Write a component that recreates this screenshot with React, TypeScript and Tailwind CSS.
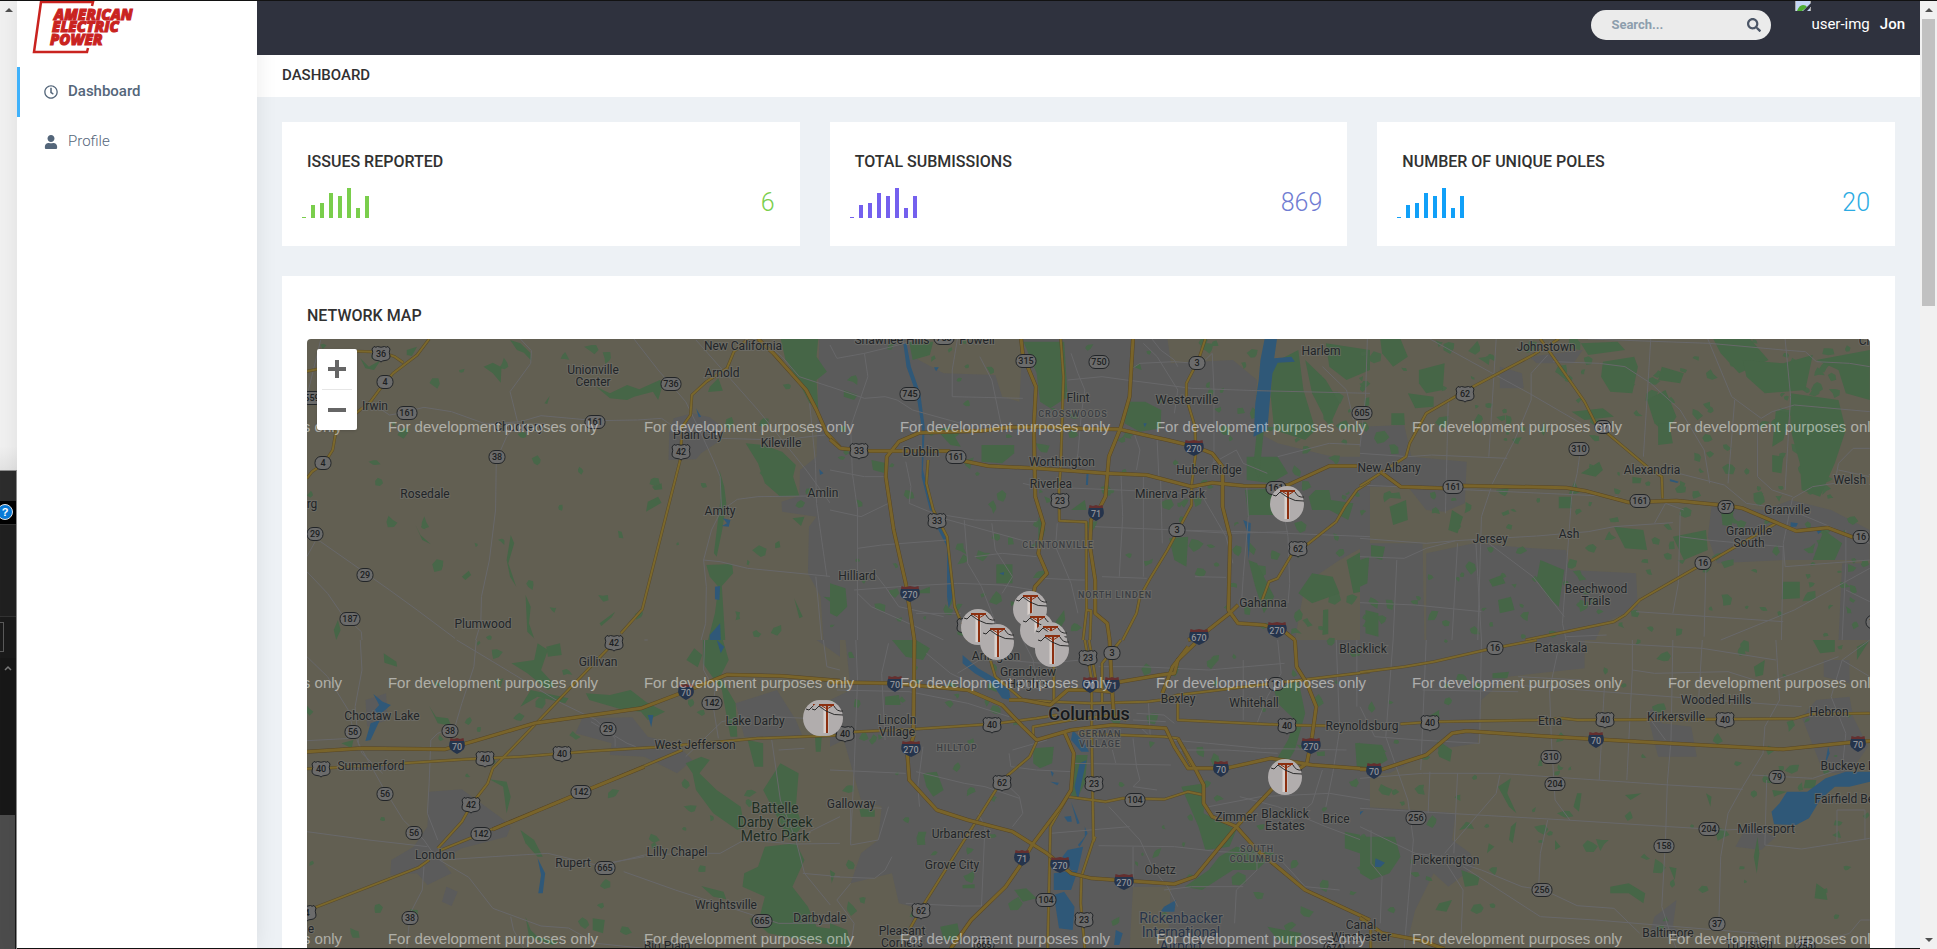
import React from "react";
import { FaUser, FaSearch, FaRegClock } from "react-icons/fa";

type Sheet = {
  x: number;
  y: number;
  kx: number;
  urban: string[];
  green: string[];
  water: string[];
  minor: string[];
  highway: string[];
  freeway: string[];
  scatter: number[][];
  labels: [string, number, number, string?][];
  shields: [string, string, number, number][];
};

/* Each sheet keeps its own survey units: kx units per pixel across, 3 per pixel down. */
const sheets: Sheet[] = [
  {
    x: 300,
    y: 330,
    kx: 2.904,
    urban: [
      "1085,265 1140,250 1190,262 1225,290 1215,335 1165,370 1150,388 1070,390 1072,310",
      "1508,27 1568,27 1568,930 1520,930 1512,800 1475,730 1478,590 1500,560 1400,545 1398,515 1450,498 1452,420 1500,380",
    ],
    green: [
      "1294,340 1345,345 1400,365 1440,405 1432,440 1450,497 1395,500 1350,460 1330,400",
      "1396,27 1505,27 1500,80 1530,125 1500,150 1505,235 1480,220 1440,140 1410,90",
      "533,110 560,98 585,112 583,158 560,130",
      "610,30 640,40 670,70 672,92 650,68 630,60",
      "175,85 200,110 235,90 215,120 190,115",
      "310,60 340,50 325,78 310,75",
      "860,170 900,190 950,165 985,178 1045,150 1055,160 1040,210 1025,185 970,200 950,210 900,205",
      "1190,170 1215,145 1228,182 1185,186",
      "1218,420 1232,470 1238,520 1226,600 1210,680 1202,670 1215,560 1222,500",
      "1180,705 1255,702 1258,730 1225,768 1235,930 1185,930 1205,850 1215,770 1190,740",
      "335,585 350,615 380,643 355,630",
      "612,615 622,640 605,700 628,770 610,740 600,690",
      "655,795 670,830 665,880 680,925 660,905",
      "470,740 490,722 497,735 480,750",
      "1022,470 1050,460 1052,478 1030,480",
      "1010,515 1040,500 1050,518 1005,545",
      "1430,565 1465,560 1455,588",
      "1380,640 1392,632 1395,652 1380,655",
      "870,880 915,845 905,862 875,888",
      "1435,805 1460,860 1450,865",
      "98,900 110,870 118,900 105,930",
      "710,220 725,198 718,222",
      "1520,800 1568,805 1568,830 1540,815",
    ],
    water: [
      "1205,770 1220,768 1218,810 1205,808",
      "1190,915 1220,880 1222,930 1190,930",
      "1228,565 1250,570 1245,590 1225,588 1240,580",
      "1508,418 1520,430 1510,435",
      "1150,235 1165,260 1158,262",
    ],
    minor: [
      "640,27 672,62 670,100 610,185 633,280 600,320 570,390 568,540 550,690 527,800 525,880 510,930",
      "20,200 60,30",
      "290,250 360,232 440,245 540,282 640,275 700,257 860,272 980,270 1050,265 1085,290",
      "970,27 1040,120 1120,215 1160,300 1200,390 1220,440 1224,540 1195,600 1172,690 1180,770 1178,880 1165,930",
      "1172,690 1220,695 1300,715 1568,742",
      "1226,540 1270,508 1330,500 1480,498",
      "20,620 60,635 150,700 260,780 340,840 450,925",
      "20,680 44,635",
      "20,725 80,790 120,850 178,905 180,930",
      "1340,30 1400,80 1450,140 1568,180",
      "1150,30 1330,240 1470,420 1568,560",
      "1480,220 1497,400 1500,520 1530,740",
      "1220,325 1400,330 1478,320 1568,310",
      "1498,740 1515,930",
      "220,228 260,255 290,250",
    ],
    highway: [
      "375,27 340,75 270,130 230,180 205,215 180,235 105,300 95,360 70,400 35,425 20,445",
      "165,64 235,66 275,80 300,98",
      "20,124 50,118",
      "1300,27 1260,65 1240,115 1180,155 1138,195 1134,255 1110,290 1104,390 994,838 932,910",
    ],
    freeway: ["1330,27 1375,70 1470,180 1500,240 1530,310 1568,352"],
    scatter: [[20, 30, 1480, 900, 45]],
    labels: [
      ["New California", 1286, 48],
      ["Arnold", 1226, 130],
      ["Unionville|Center", 850, 139],
      ["Irwin", 217, 228],
      ["Chuckery", 636, 292],
      ["Plain City", 1156, 316],
      ["Kileville", 1396, 340],
      ["Amlin", 1520, 490],
      ["Rosedale", 362, 493],
      ["Amity", 1221, 544],
      ["Plumwood", 530, 882],
      ["rg", 36, 522],
    ],
    shields: [
      ["u", "36", 234, 72],
      ["s", "4", 248, 156],
      ["s", "559", 34, 204],
      ["s", "161", 312, 249],
      ["s", "161", 858, 275],
      ["s", "736", 1078, 161],
      ["s", "38", 573, 381],
      ["u", "42", 1105, 366],
      ["s", "4", 68, 399],
      ["s", "29", 43, 612],
      ["s", "29", 190, 735],
      ["s", "187", 144, 866],
    ],
  },
  {
    x: 300,
    y: 640,
    kx: 2.904,
    urban: [
      "375,455 470,448 500,470 580,530 612,560 600,590 470,625 410,660 440,700 370,735 340,700 262,705 265,660 330,620 370,560",
      "425,740 458,755 440,798 412,785",
      "820,235 965,232 1010,290 1090,310 1140,360 1095,400 1000,350 900,345 905,310 800,280",
      "1265,190 1385,150 1440,240 1460,290 1290,290",
      "190,180 250,160 255,240 195,260",
      "130,385 290,370 250,392",
      "1500,0 1568,0 1568,50",
    ],
    green: [
      "1170,0 1228,0 1245,60 1220,110 1265,190 1270,290 1250,290 1225,150 1190,100 1170,70",
      "1122,60 1145,25 1168,45 1155,82",
      "830,160 900,165 960,150 1010,190 1060,215 1010,240 990,215 940,210 840,180",
      "614,70 680,60 690,10 720,30 700,90 740,135 720,150 660,100",
      "1120,370 1165,350 1190,360 1160,400 1210,450 1280,500 1290,560 1270,570 1200,520 1150,450 1140,400",
      "1300,300 1345,310 1345,380 1320,380",
      "1345,450 1395,370 1448,400 1440,500 1460,560 1420,600 1380,520",
      "1350,620 1440,610 1465,660 1430,740 1475,800 1500,860 1568,870 1568,920 1360,880 1330,850 1350,770 1285,740 1290,700 1330,680",
      "1165,738 1230,755 1238,778 1200,770",
      "375,198 395,230 430,235 440,258 400,250",
      "550,418 600,425 612,470 600,520 590,440",
      "640,570 680,600 705,650 690,650 655,610",
      "850,835 885,840 880,880 850,870",
      "243,40 280,65 282,80 245,68",
      "715,20 755,10 760,45 720,50",
      "120,310 155,300 150,325",
      "655,830 670,870 690,890 750,905 735,915 665,890",
      "640,200 670,150 780,175 770,190 690,170",
      "1495,280 1515,290 1512,335 1498,335",
    ],
    water: [
      "213,162 240,185 264,195 230,225 215,212 230,195",
      "232,240 205,300 190,303 205,250",
      "690,655 712,700 705,760 692,760 700,705",
      "1010,225 1026,225 1020,262",
      "1210,0 1232,20 1222,40",
    ],
    minor: [
      "512,0 505,80 470,190 450,260 400,280 380,300 375,430 370,520 400,600",
      "455,0 560,65 680,140 760,190 860,240 915,295 915,320",
      "175,0 180,90 160,200 170,310 240,440 300,540 360,600 400,660",
      "20,50 80,110 140,210 155,270 180,340 240,400",
      "20,575 200,600 370,620",
      "410,660 560,650 720,640 860,675 1000,650",
      "405,660 490,712 560,805 700,858 780,864 860,910 1000,925",
      "940,695 1090,750 1240,800 1390,850 1568,850",
      "910,668 1000,645 1150,640 1220,640 1290,600 1440,612 1568,610",
      "360,680 355,750 320,820 310,925",
      "612,830 620,870 650,925",
      "1175,0 1172,90 1205,150 1200,200 1215,295",
      "1370,300 1395,480 1440,600 1465,700 1540,795",
      "20,302 150,295",
      "1370,230 1470,235",
      "1390,330 1465,325",
      "1470,580 1568,530",
      "1520,0 1530,80 1568,90",
      "1000,0 1010,0",
      "845,245 950,310 975,320",
      "1120,350 1225,245 1290,230",
      "1460,700 1568,710",
    ],
    highway: [
      "900,20 560,385 545,430 500,490 470,545 400,625",
      "20,386 70,385 300,370 480,358 640,350 850,333 1030,322 1220,305 1330,295 1568,286",
      "30,808 345,682 375,660",
      "405,632 500,592 800,465 1110,330",
    ],
    freeway: [
      "20,335 180,325 420,328 500,305 680,250 990,205 1130,150 1240,104 1400,108 1568,122",
      "560,568 820,456 1000,380",
    ],
    scatter: [[20, 0, 1400, 900, 40]],
    labels: [
      ["Gillivan", 866, 67],
      ["Choctaw Lake", 237, 229],
      ["Summerford", 206, 379],
      ["London", 391, 646],
      ["Lake Darby", 1320, 244],
      ["West Jefferson", 1148, 316],
      ["Battelle|Darby Creek|Metro Park", 1379, 547, "park"],
      ["Lilly Chapel", 1096, 637],
      ["Rupert", 794, 670],
      ["Wrightsville", 1238, 796],
      ["Darbydale", 1510, 834],
      ["Big Plain", 1065, 917],
      ["e", 31, 868],
    ],
    shields: [
      ["u", "42", 912, 8],
      ["i", "70", 1122, 155],
      ["s", "142", 1197, 189],
      ["s", "29", 894, 267],
      ["s", "56", 155, 276],
      ["s", "38", 437, 272],
      ["i", "70", 455, 319],
      ["u", "40", 536, 356],
      ["u", "40", 760, 341],
      ["u", "40", 60, 386],
      ["s", "56", 247, 462],
      ["s", "142", 817, 456],
      ["u", "42", 498, 494],
      ["s", "56", 331, 579],
      ["s", "142", 527, 582],
      ["s", "665", 887, 684],
      ["s", "38", 320, 834],
      ["u", "4", 20, 818],
      ["s", "665", 1343, 843],
    ],
  },
  {
    x: 830,
    y: 330,
    kx: 2.904,
    urban: [
      "0,27 225,27 240,80 330,130 480,135 500,200 550,215 560,27 980,27 990,100 1170,90 1240,150 1230,300 1300,340 1460,380 1568,380 1568,640 1480,690 1380,760 1350,930 0,930",
    ],
    green: [
      "562,35 680,35 690,200 640,235 610,215 600,130",
      "868,215 915,215 962,240 960,295 900,305 855,280",
      "1285,100 1360,60 1375,180 1410,300 1380,330 1290,300 1280,200",
      "1205,480 1300,475 1305,555 1215,555 1210,520",
      "1390,500 1410,480 1450,480 1455,510 1520,520 1505,570 1450,540 1400,540",
      "440,345 535,345 535,370 500,400 440,395",
      "483,703 530,703 530,760 483,760",
      "985,625 1040,620 1035,710 1000,690",
      "1440,40 1568,60 1568,120 1500,150 1450,110",
      "1380,90 1440,150 1480,220 1450,290 1400,190",
      "1210,380 1300,380 1330,430 1280,460 1210,450",
      "230,35 300,35 290,75 240,90",
      "310,300 345,290 380,350 350,345",
      "120,390 165,400 160,430 125,420",
      "0,760 45,775 50,830 20,860 0,850",
      "1215,690 1240,700 1290,800 1260,850 1235,770",
      "1360,790 1400,730 1460,740 1480,790 1400,820",
      "1500,690 1568,650 1568,780 1520,790",
      "1432,840 1447,838 1447,912 1430,915",
      "605,560 625,600 600,680 605,620",
      "655,875 680,840 683,870 665,900",
      "700,540 740,510 745,540",
      "1240,300 1260,300 1245,450 1230,400",
      "40,180 80,195 70,210 40,200",
      "880,110 900,100 905,120",
      "240,790 290,770 290,790",
    ],
    water: [
      "1262,27 1298,27 1290,85 1340,80 1350,95 1300,98 1285,130 1280,180 1270,300 1230,320 1235,220 1245,150 1250,90",
      "213,40 222,40 235,110 262,190 275,290 270,420 285,480 300,545 290,540 266,440 268,300 250,190 222,110",
      "303,545 320,590 345,640 355,800 345,835 340,800 340,650 310,590",
      "302,112 316,112 308,124",
      "745,430 751,430 749,465 743,465",
      "910,280 920,280 914,292",
      "492,730 506,726 504,736",
      "1200,570 1222,580 1216,690 1210,600",
    ],
    minor: [
      "0,45 20,85 100,70 180,50 260,27",
      "0,170 100,205 160,200 195,210 240,240 380,280",
      "100,70 110,140 60,290 65,430 80,540 80,930",
      "370,27 355,120 355,200 560,205",
      "435,80 470,150 500,300",
      "690,150 790,140 860,150 900,155",
      "700,70 720,130 740,180 730,250 720,370 710,420",
      "870,120 900,100 1000,95 1060,100",
      "910,40 950,80 1010,180 1000,250",
      "935,27 960,60 1000,90 1010,110",
      "1080,100 1110,70 1115,180 1115,400",
      "1050,175 1240,182 1568,190",
      "900,155 1050,175",
      "0,420 100,440 160,440",
      "220,395 235,470 230,520 300,550 420,570 600,575",
      "310,560 590,640",
      "80,655 150,645 340,630",
      "0,540 90,560 170,520",
      "70,780 200,770 370,760 500,765 590,780",
      "560,460 600,470 840,480 1040,490",
      "845,430 850,560 840,740",
      "910,440 910,740",
      "960,445 965,640",
      "770,590 1000,600 1200,605 1568,620",
      "660,580 655,650 700,760 720,850",
      "790,740 920,745",
      "1000,600 1160,610 1330,605",
      "620,745 720,750 740,750",
      "1065,470 1150,620 1170,700",
      "1060,740 1150,742",
      "1320,560 1330,620 1335,760 1330,820",
      "1210,470 1215,560 1200,740 1195,820",
      "420,680 500,670 600,680",
      "390,570 400,700 440,770 470,850 500,930",
      "470,580 480,660 530,740 500,790",
      "130,730 160,770 200,830 330,860",
      "250,850 380,850",
      "80,790 120,830 250,890 330,930",
      "1300,380 1450,340 1568,345",
      "1110,400 1180,360 1200,400 1270,430",
      "1430,110 1500,180 1520,270",
      "880,300 900,360 890,420",
      "950,330 955,440",
    ],
    highway: [
      "670,27 678,140 670,410 665,480 666,572 744,576 745,840 735,930",
      "745,840 758,842 755,930",
      "1090,27 1070,90 1035,160 1035,205 1060,290 1062,370 1050,465 1050,525 980,660 930,745 900,800 890,850 850,930",
      "285,390 280,460 300,540 340,620 355,760 362,830 390,900 400,930",
      "1568,455 1530,480 1495,530 1470,575 1390,640 1340,675 1300,745 1275,755 1255,810",
    ],
    freeway: [
      "0,328 30,355 110,363 345,363 375,390 460,408 600,415 800,430 920,435 1050,470 1110,458 1200,467 1290,468 1330,465 1450,408 1530,408",
      "245,930 220,760 185,600 162,440 165,380 200,335 260,308 440,302 520,292 620,290 740,296 840,298 980,330 1060,350 1110,370 1140,410 1140,530 1162,620 1157,840 1185,880 1260,885 1320,905 1350,930",
      "880,27 870,200 845,290 810,380 800,500 785,530 758,570 755,650 770,750 770,850 805,880 812,930",
      "555,27 560,75 598,170 592,290 596,500 620,580 605,670 630,730 595,770 590,800",
      "1185,825 1160,850 1080,915 1040,930",
    ],
    scatter: [
      [0, 30, 540, 880, 45],
      [600, 30, 600, 880, 50],
      [1200, 30, 368, 880, 60],
    ],
    labels: [
      ["Shawnee Hills", 180, 31],
      ["Powell", 428, 31],
      ["Harlem", 1426, 64],
      ["Flint", 721, 205],
      ["Westerville", 1036, 208, "town"],
      ["CROSSWOODS", 706, 252, "area"],
      ["Dublin", 265, 364, "town"],
      ["Worthington", 674, 397],
      ["Huber Ridge", 1101, 421],
      ["Riverlea", 642, 463],
      ["Minerva Park", 986, 493],
      ["CLINTONVILLE", 662, 645, "area"],
      ["Hilliard", 77, 739],
      ["NORTH LINDEN", 827, 795, "area"],
      ["Gahanna", 1258, 820],
    ],
    shields: [
      ["s", "750", 331, 25],
      ["s", "315", 570, 93],
      ["s", "750", 782, 96],
      ["s", "3", 1066, 99],
      ["s", "745", 231, 192],
      ["s", "605", 1545, 249],
      ["u", "33", 85, 363],
      ["s", "161", 367, 381],
      ["i", "270", 1056, 355],
      ["s", "161", 1296, 474],
      ["u", "23", 667, 513],
      ["i", "71", 773, 550],
      ["u", "33", 310, 572],
      ["s", "3", 1008, 600],
      ["u", "62", 1359, 656],
      ["i", "270", 231, 791],
      ["i", "270", 1297, 901],
      ["i", "670", 1071, 921],
      ["u", "33", 394, 888],
    ],
  },
  {
    x: 830,
    y: 640,
    kx: 2.904,
    urban: [
      "45,0 1568,0 1568,927 980,927 990,740 880,740 870,927 230,927 240,800 200,790 180,700 60,730 90,640 140,600 150,500 90,480 40,300 0,320 0,180 60,150",
    ],
    green: [
      "590,325 650,320 645,370 610,385 590,370",
      "715,345 748,345 740,430 720,470 700,470",
      "1090,430 1085,520 1180,570 1160,620 1090,630 1070,560 1020,440",
      "1130,650 1180,620 1290,640 1240,690 1170,690 1080,750 1030,740 1100,690",
      "1495,575 1568,590 1568,650 1495,625",
      "1525,310 1568,305 1568,385 1530,385",
      "1290,150 1360,120 1380,220 1350,330 1310,400 1330,300 1350,240 1300,190",
      "270,400 310,395 330,450 300,470 280,440",
      "180,0 250,0 290,25 270,60 220,50",
      "85,505 130,510 130,530 90,530",
      "160,170 200,165 205,195 160,195",
      "320,860 370,850 380,900 330,900",
      "535,750 570,745 600,775 560,785",
      "1270,860 1370,880 1350,920 1300,900",
      "0,690 15,700 5,730",
      "385,735 420,733 420,745 385,745",
      "1290,370 1330,300 1350,320 1320,380",
      "0,850 50,870 60,920 0,920",
    ],
    water: [
      "385,45 430,85 480,115 520,150 525,180 500,175 470,130 420,100 385,70",
      "705,270 740,310 752,335 730,335 700,300",
      "725,370 745,360 730,430 720,480 710,440",
      "690,630 735,620 720,690 700,690 675,650",
      "650,700 720,690 700,750 650,750",
      "650,765 680,755 710,800 705,870 665,865",
      "970,800 1005,780 1000,815 960,815",
      "640,390 650,400 645,410",
      "640,425 665,428 660,436",
      "680,530 700,528 702,545 690,545",
      "700,485 725,550 718,552",
      "740,560 748,580 725,620 720,615 740,590",
      "830,870 850,880 840,915 825,915",
    ],
    minor: [
      "75,0 80,120 70,390 60,600",
      "0,390 220,400",
      "250,395 390,430 450,440 550,475",
      "270,320 255,440 260,500",
      "520,340 525,380 600,390 700,395",
      "530,330 630,300",
      "710,370 990,375",
      "820,330 830,370",
      "880,295 890,380",
      "810,500 900,600 940,690 980,740 1010,800",
      "780,617 1000,620 1130,635 1240,640",
      "990,300 1100,310 1250,325 1500,330",
      "890,380 900,420 880,440 950,450",
      "890,220 970,225 1000,250",
      "880,240 975,245",
      "925,190 930,290 900,260",
      "220,790 380,798 440,798 450,560 430,520",
      "170,500 140,600 60,615 60,500 0,480",
      "150,505 90,500",
      "530,560 560,520 550,470 500,420",
      "1190,470 1300,500 1440,560 1568,610",
      "1100,500 1250,470 1450,460 1568,480",
      "1430,390 1400,490 1320,560",
      "1470,0 1480,270 1460,400 1440,500",
      "1530,0 1530,200",
      "0,710 130,715 160,690 180,650",
      "60,730 20,780 70,850 60,920",
      "780,80 900,80 1100,90 1320,70",
      "1200,60 1200,240",
      "1010,330 1150,330 1300,340",
      "1300,0 1310,100 1270,170 1240,250",
      "170,10 150,100 160,300",
      "280,40 350,100 430,140",
      "370,100 450,50",
      "20,150 230,155 400,190 520,230",
      "500,60 620,70 730,60",
      "560,0 590,60 600,140",
      "1240,620 1240,690 1180,750 1175,850",
      "1480,750 1380,740 1300,650",
      "640,580 870,560",
      "880,620 880,740",
      "970,750 1050,740 1200,740",
    ],
    highway: [
      "740,0 760,120 760,290 765,600 730,710 728,790 740,927",
      "752,0 772,120",
      "845,0 790,70 790,190",
      "460,40 480,110 560,180 650,185 760,190 920,185 960,180 1010,165 1290,130 1568,95",
      "650,75 650,185",
      "45,277 250,267 470,252 600,235 660,225",
      "590,290 590,260 700,240 820,225 860,240",
      "720,280 970,290 1010,295 1050,380",
      "1010,180 1010,240 1320,255 1440,257",
      "600,305 580,350 500,420 265,805 230,870",
      "690,470 800,485 850,475 970,478 1040,455 1085,465",
      "690,470 640,560 632,927",
      "1570,870 1570,927",
      "770,590 765,605",
    ],
    freeway: [
      "245,0 242,290 225,345 230,420 310,510 400,540 530,575 630,640 700,700 760,715 1000,732 1060,710 1180,560 1290,440 1385,370 1400,290 1412,200 1385,130 1355,80 1350,0",
      "0,127 180,130 400,150 500,195 560,260 600,300 700,270 820,255 975,265 1000,320 1040,385 1150,385 1280,355 1400,375 1568,388",
      "812,0 818,130 960,105 1000,100 1010,60 1060,10",
      "818,130 825,240",
      "680,275 708,340 700,450 670,500 590,610 550,680 510,740 410,840 350,927",
      "1010,295 1060,385 1085,435 1085,490 1110,530 1180,560 1240,630 1380,750 1568,840",
      "520,180 560,180 640,195 690,150 760,150 815,155",
      "1040,20 995,80 965,160",
    ],
    scatter: [
      [0, 0, 560, 900, 35],
      [800, 0, 768, 900, 45],
    ],
    labels: [
      ["Arlington", 482, 48],
      ["Grandview|Heights", 575, 115],
      ["Blacklick", 1547, 27],
      ["Columbus", 752, 219, "city"],
      ["Bexley", 1011, 178],
      ["Whitehall", 1232, 190],
      ["Lincoln|Village", 195, 259],
      ["HILLTOP", 370, 324, "area"],
      ["GERMAN|VILLAGE", 783, 297, "area"],
      ["Reynoldsburg", 1545, 259],
      ["Galloway", 60, 493],
      ["Urbancrest", 381, 583],
      ["Zimmer", 1178, 532],
      ["Blacklick|Estates", 1320, 541],
      ["Brice", 1470, 538],
      ["SOUTH|COLUMBUS", 1241, 643, "area"],
      ["Grove City", 355, 676],
      ["Obetz", 957, 691],
      ["Rickenbacker|International|Airport", 1018, 877, "airport"],
      ["Pleasant|Corners", 210, 892],
      ["Canal|Winchester", 1542, 874],
    ],
    shields: [
      ["u", "23", 750, 54],
      ["s", "3", 820, 39],
      ["i", "70", 188, 133],
      ["i", "70", 755, 136],
      ["i", "71", 818, 136],
      ["s", "16", 1296, 132],
      ["u", "40", 43, 282],
      ["u", "40", 471, 254],
      ["u", "40", 1326, 257],
      ["i", "270", 234, 326],
      ["i", "270", 1396, 319],
      ["i", "70", 1136, 388],
      ["u", "62", 500, 429],
      ["u", "23", 766, 431],
      ["s", "104", 887, 480],
      ["i", "71", 558, 654],
      ["i", "270", 668, 676],
      ["i", "270", 854, 725],
      ["s", "104", 628, 780],
      ["u", "62", 264, 812],
      ["u", "23", 737, 839],
      ["s", "665", 448, 916],
      ["s", "674", 1465, 925],
    ],
  },
  {
    x: 1360,
    y: 330,
    kx: 2.717,
    urban: [
      "0,290 120,285 140,380 290,395 285,520 230,545 180,540 130,470 0,470",
      "0,640 170,640 175,930 0,930",
      "180,670 310,640 470,655 560,660 570,720 750,730 755,830 660,880 640,930 180,930",
      "460,80 605,60 580,100 480,100",
      "380,110 440,130 445,175 380,175",
      "955,530 1100,540 1170,510 1280,540 1385,600 1385,690 1150,690 970,700 945,620",
      "1310,700 1386,700 1386,930 1300,930",
    ],
    green: [
      "55,27 110,27 130,80 90,110 60,70",
      "160,120 230,100 225,180 180,190 160,160",
      "130,190 200,200 200,230 150,235",
      "85,250 120,250 122,285 85,285",
      "660,95 745,80 755,110 740,190 680,185 655,140",
      "600,40 700,35 720,60 620,75",
      "820,110 880,130 870,160 810,150",
      "780,210 830,180 860,260 830,310 800,280",
      "960,27 1060,27 1110,90 1030,130 980,70",
      "1040,90 1150,100 1230,75 1210,180 1100,190 1050,140",
      "1240,90 1385,60 1385,210 1320,190 1300,120",
      "1170,190 1300,210 1320,300 1290,400 1250,500 1200,480 1195,400 1170,300",
      "1130,240 1170,250 1150,330 1120,350",
      "1120,375 1150,380 1145,430 1120,425",
      "540,500 575,500 575,535 540,535",
      "600,430 650,395 660,420 640,440",
      "575,245 660,235 690,260 610,270",
      "80,530 125,510 130,570 90,585",
      "30,645 68,650 60,690 30,680",
      "0,690 25,680 20,760 0,770",
      "490,690 555,720 540,830 510,800 480,750",
      "350,750 385,735 395,760 360,770",
      "375,810 410,800 420,840 380,850",
      "690,590 770,600 780,660 720,655",
      "850,620 940,600 945,660 880,690",
      "1150,755 1195,755 1195,805 1145,808",
      "1260,600 1310,640 1290,690 1230,690",
      "980,530 1015,540 1010,590 985,585",
      "250,540 280,560 265,610 240,600",
      "740,440 765,445 762,460 740,460",
      "15,840 50,850 50,920 15,910",
      "810,280 840,280 850,340 810,345",
    ],
    water: [
      "842,447 866,455 862,459 842,454",
      "1170,577 1190,580 1185,590 1170,590",
      "1240,600 1255,602 1245,612",
    ],
    minor: [
      "20,27 15,200 0,350",
      "190,27 360,130 460,190 600,280",
      "370,27 350,380",
      "510,75 465,130 465,210 420,330 360,460 330,560 320,930",
      "0,370 130,380 195,375 400,385",
      "240,205 232,550",
      "525,95 650,100 720,110 790,160 870,240 935,360 950,460",
      "620,27 950,40 1150,60 1210,65 1240,95 1330,100 1385,110",
      "790,27 770,380",
      "945,27 1010,200 1090,265 1120,245 1180,225 1385,245",
      "1155,27 1170,200 1155,480",
      "1018,210 1000,460",
      "1080,270 1080,440 1120,480 1175,500",
      "600,350 590,430 575,500 550,880 560,930",
      "0,465 700,500",
      "865,430 990,465 1050,520 1170,540 1385,640",
      "0,625 180,640 260,632 480,618 620,605 690,590 850,578",
      "0,680 120,685 180,655 260,632",
      "265,640 250,930",
      "315,640 320,740 330,930",
      "350,640 470,740 555,860",
      "870,545 865,760 850,850",
      "870,620 940,630 1150,650",
      "1175,505 1230,470 1290,460 1300,400 1340,355 1385,355",
      "1175,505 1150,640 1155,710 1385,690",
      "940,700 935,920",
      "0,818 150,825 330,845",
      "750,845 1150,875",
      "1150,650 1145,930",
      "1320,600 1320,700 1310,930",
      "1320,780 1385,815",
      "100,690 90,930",
      "800,580 830,520 880,540",
      "1300,420 1385,440",
      "560,920 670,915",
      "980,930 1180,840 1385,715",
    ],
    highway: [
      "490,27 515,65 610,215 640,280 780,410 820,440 822,505",
      "540,27 470,75 290,180 180,250 135,340 125,380 55,430 20,455 0,468",
      "450,930 690,875 720,855 760,810 910,715 950,695 1130,580",
    ],
    freeway: [
      "55,425 110,470 230,475 280,467 560,473 610,482 730,517 860,512 1000,527 1040,535 1125,575 1185,603 1270,593 1340,622",
    ],
    scatter: [
      [0, 30, 620, 330, 35],
      [560, 30, 820, 560, 75],
      [0, 480, 560, 440, 40],
      [560, 560, 820, 360, 55],
    ],
    labels: [
      ["Johnstown", 506, 52],
      ["Alexandria", 794, 421],
      ["New Albany", 80, 415],
      ["Welsh Hills", 1366, 451],
      ["Granville", 1160, 541],
      ["Granville|South", 1058, 622],
      ["Jersey", 354, 626],
      ["Ash", 568, 613],
      ["Beechwood|Trails", 641, 796],
      ["Ch", 1376, 33],
    ],
    shields: [
      ["u", "62", 286, 192],
      ["s", "37", 659, 291],
      ["s", "310", 596, 357],
      ["s", "161", 254, 471],
      ["s", "161", 762, 513],
      ["s", "37", 995, 531],
      ["s", "16", 1361, 621],
      ["s", "16", 931, 699],
      ["s", "13", 1396, 876],
    ],
  },
  {
    x: 1360,
    y: 640,
    kx: 2.717,
    urban: [
      "0,0 330,0 610,0 610,85 400,110 330,180 320,310 200,330 80,400 0,400",
      "0,500 150,510 260,520 250,600 300,640 310,680 240,740 200,700 150,810 130,900 0,850",
      "820,250 900,260 915,350 810,350 780,220 800,200",
      "1240,180 1330,170 1340,230 1380,320 1330,400 1260,400 1200,230",
      "1050,560 1130,590 1090,630 1020,620",
      "1260,60 1330,60 1330,130 1260,110",
      "800,830 860,780 850,860 880,880 790,870",
    ],
    green: [
      "0,310 60,315 75,360 30,390 0,380",
      "0,590 95,590 110,650 80,700 30,720 0,700",
      "275,690 325,710 320,735 285,740",
      "215,790 250,780 235,815 205,810",
      "375,440 410,415 400,460 425,520 405,500",
      "210,300 250,330 245,365 215,350",
      "360,100 405,95 400,115 360,115",
      "170,240 215,210 215,240 180,250",
      "590,460 602,460 595,515 580,500",
      "410,560 425,545 415,610 405,600",
      "680,740 730,730 775,760 770,790 730,760 680,760",
      "1080,590 1085,640 1078,700 1070,650",
      "1240,730 1265,750 1270,780 1235,775",
      "1230,0 1290,0 1290,35 1250,40",
      "1070,80 1100,60 1095,105 1075,110",
      "1210,420 1240,420 1235,445 1205,445",
      "530,600 545,620 530,630",
      "345,640 350,610 365,620",
      "720,465 765,460 735,480",
      "840,680 860,685 855,720",
      "940,460 955,470 952,500",
      "1120,450 1160,455 1125,470",
      "1350,20 1385,0 1350,60",
    ],
    water: [
      "1160,455 1215,455 1265,415 1320,395 1386,395 1386,425 1330,440 1290,440 1250,480 1220,535 1185,555 1125,553 1118,515 1140,490",
      "42,655 68,668 55,682 40,680",
      "1272,320 1276,340 1262,380",
      "0,515 10,512 0,525",
    ],
    minor: [
      "90,0 70,290 95,370 130,480 145,600 120,927",
      "180,0 165,390",
      "330,0 325,310 160,300",
      "540,20 515,150 520,300 530,480 570,540",
      "665,120 650,420",
      "740,0 740,90 725,420",
      "850,0 845,300 835,430 830,600 820,800 840,870",
      "0,415 170,400 380,400 840,435 1040,448",
      "0,505 560,540 840,560 990,570 1100,565",
      "380,405 370,460 230,640",
      "240,120 1200,200",
      "740,90 800,100 1000,95 1100,130 1180,100 1300,50",
      "1130,0 1140,180 1100,260 1095,340 1040,440 1000,520 980,650 975,850",
      "1065,405 1230,415 1310,385",
      "1105,420 1100,615 1200,627 1385,595",
      "1296,510 1372,510",
      "1372,510 1372,600",
      "1296,510 1296,605",
      "0,560 150,640 220,650 330,690 440,740 500,750 590,797 690,805 760,880",
      "510,540 490,640 485,750",
      "220,645 280,750 275,880",
      "30,570 30,670 60,710 55,850",
      "840,870 860,927",
      "1385,0 1310,60 1280,170 1320,280 1310,390",
      "1310,60 1385,110",
      "930,0 920,180",
      "190,395 185,520",
      "265,400 255,640",
      "0,200 40,290 160,300",
      "600,5 930,25 1130,60",
      "780,225 830,300",
      "170,150 430,155",
      "1385,840 1360,840 1330,880 1270,900",
      "280,680 490,830 640,840 1080,880",
      "430,110 600,120",
    ],
    highway: [
      "110,252 200,245 480,240 550,235 590,240 960,238 1180,236 1225,222 1385,220",
      "0,97 120,80 200,65 340,30 480,0",
    ],
    freeway: [
      "0,388 60,388 180,345 250,280 290,273 480,287 760,305 1150,328 1350,305 1386,303",
      "0,833 60,880 160,900 230,927",
    ],
    scatter: [
      [0, 0, 560, 880, 40],
      [560, 0, 820, 880, 45],
    ],
    labels: [
      ["Pataskala", 547, 25],
      ["Wooded Hills", 968, 181],
      ["Etna", 516, 244],
      ["Kirkersville", 858, 232],
      ["Hebron", 1273, 217],
      ["Buckeye Lake", 1350, 379],
      ["Fairfield Beach", 1343, 478],
      ["Millersport", 1103, 568],
      ["Pickerington", 234, 661],
      ["Baltimore", 836, 879],
      ["Thurston", 1058, 911],
    ],
    shields: [
      ["s", "16", 366, 24],
      ["u", "40", 191, 250],
      ["u", "40", 666, 240],
      ["u", "40", 993, 240],
      ["i", "70", 642, 299],
      ["i", "70", 1354, 311],
      ["i", "70", 37, 392],
      ["s", "310", 520, 351],
      ["s", "204", 531, 432],
      ["s", "79", 1134, 411],
      ["s", "256", 151, 534],
      ["s", "204", 949, 567],
      ["s", "158", 827, 618],
      ["s", "256", 495, 750],
      ["s", "37", 971, 852],
      ["s", "256", 1210, 919],
    ],
  },
];

function scatterPath(regions: number[][], seed: number) {
  let s = seed;
  const rnd = () => {
    s = (s * 16807) % 2147483647;
    return s / 2147483647;
  };
  let d = "";
  for (const [x, y, w, h, n] of regions) {
    for (let k = 0; k < n; k++) {
      const cx = x + rnd() * w;
      const cy = y + rnd() * h;
      const r = 7 + rnd() * 15;
      const turn = rnd() * 6;
      for (let i = 0; i < 6; i++) {
        const a = turn + (i * Math.PI) / 3;
        const q = r * (0.3 + rnd() * 0.9);
        d += `${i ? "L" : "M"}${Math.round(cx + Math.cos(a) * q)} ${Math.round(cy + Math.sin(a) * q)}`;
      }
      d += "Z";
    }
  }
  return d;
}

function Lines({ list, stroke, width }: { list: string[]; stroke: string; width: number }) {
  return (
    <g fill="none" stroke={stroke} strokeWidth={width} strokeLinejoin="round">
      {list.map((p, i) => (
        <polyline key={i} points={p} vectorEffect="non-scaling-stroke" />
      ))}
    </g>
  );
}

function Areas({ list, fill }: { list: string[]; fill: string }) {
  return (
    <g fill={fill}>
      {list.map((p, i) => (
        <polygon key={i} points={p} />
      ))}
    </g>
  );
}

const labelStyles: Record<string, { cls: string; fill: string; line: number }> = {
  place: { cls: "text-[12px]", fill: "#222528", line: 12 },
  town: { cls: "text-[13px]", fill: "#222528", line: 13 },
  park: { cls: "text-[14px]", fill: "#1f2d22", line: 14 },
  airport: { cls: "text-[14px]", fill: "#27344a", line: 14 },
  area: { cls: "text-[9px] font-medium tracking-widest", fill: "#3a3d42", line: 10 },
  city: { cls: "text-[18px] font-medium", fill: "#17191c", line: 18 },
};

function MapLabel({ text, x, y, kind }: { text: string; x: number; y: number; kind: string }) {
  const st = labelStyles[kind];
  const rows = text.split("|");
  return (
    <>
      {rows.map((row, i) => (
        <text
          key={i}
          x={x}
          y={Math.round(y + (i - (rows.length - 1) / 2) * st.line)}
          textAnchor="middle"
          dominantBaseline="central"
          className={st.cls}
          fill={st.fill}
          stroke="#70706c"
          strokeWidth="2"
          strokeOpacity="0.7"
          paintOrder="stroke"
        >
          {row}
        </text>
      ))}
    </>
  );
}

function Shield({ kind, text, x, y }: { kind: string; text: string; x: number; y: number }) {
  const h = text.length > 2 ? 10 : 8;
  return (
    <g transform={`translate(${x} ${y})`}>
      {kind === "s" && (
        <rect x={-h} y="-6.5" width={h * 2} height="13" rx="6" fill="#6b6b6b" stroke="#222528" />
      )}
      {kind === "u" && (
        <path
          d="M-7 -7.5Q-5 -6 -3.5 -7.5Q0 -6 3.5 -7.5Q5 -6 7 -7.5L9 -5Q7.500 -2 9 2Q9 6 4 6.500Q1.500 6.500 0 8Q-1.500 6.500 -4 6.500Q-9 6 -9 2Q-7.500 -2 -9 -5Z"
          fill="#6b6b6b"
          stroke="#222528"
        />
      )}
      {kind === "i" && (
        <>
          <path
            d={
              text.length > 2
                ? "M-9 -5H9Q11 0 8 3.500Q5 6 0 8Q-5 6 -8 3.500Q-11 0 -9 -5Z"
                : "M-7 -5H7Q9 0 6.500 3.500Q4 6 0 8Q-4 6 -6.500 3.500Q-9 0 -7 -5Z"
            }
            fill="#25344c"
          />
          <path
            d={
              text.length > 2
                ? "M-9 -5L-8.500 -8L-5 -7L0 -8L5 -7L8.500 -8L9 -5Z"
                : "M-7 -5L-6.500 -8L-3 -7L0 -8L3 -7L6.500 -8L7 -5Z"
            }
            fill="#642f2f"
          />
        </>
      )}
      <text
        y={kind === "i" ? 1 : 0}
        textAnchor="middle"
        dominantBaseline="central"
        className="text-[9px] font-medium"
        fill={kind === "i" ? "#8f9298" : "#1d1f22"}
      >
        {text}
      </text>
    </g>
  );
}

function PoleMarker({ x, y }: { x: number; y: number }) {
  return (
    <g transform={`translate(${x} ${y})`}>
      <ellipse rx="17" ry="18" fill="#b1adad" />
      <path d="M0 -11V15" stroke="#d8d0cc" strokeWidth="5" />
      <path d="M-7 -13H8M1 -13V15" stroke="#8c2f10" strokeWidth="2" fill="none" />
      <path d="M-4 -12L1 -9L6 -12" stroke="#8c2f10" strokeWidth="1" fill="none" />
      <path
        d="M-14 -9L-11 -8L-7 -12Q-3 -9 0 -7Q8 -2 17 -3M8 -12Q11 -6 17 -7"
        stroke="#2b2b2b"
        strokeWidth="1"
        fill="none"
      />
    </g>
  );
}

const poles = [
  [1287, 504],
  [1030, 609],
  [978, 627],
  [1037, 630],
  [1050, 640],
  [997, 642],
  [1052, 649],
  [820, 718],
  [826, 718],
  [1285, 777],
];

const watermarkX = [237, 493, 749, 1005, 1261, 1517, 1773];
const watermarkY = [426, 682, 938];

function NetworkMap() {
  const place = (s: Sheet, px: number, py: number) => [Math.round(s.x + px / s.kx), Math.round(s.y + py / 3)];
  const frame = (s: Sheet) => `translate(${s.x} ${s.y}) scale(${1 / s.kx} ${1 / 3})`;
  return (
    <svg
      viewBox="307 339 1563 609"
      preserveAspectRatio="xMidYMin slice"
      className="block h-full w-full font-[Roboto,sans-serif]"
      role="img"
      aria-label="Network map of Columbus"
    >
      <rect x="307" y="339" width="1563" height="700" fill="#625f52" />
      {sheets.map((s, i) => (
        <g key={i} transform={frame(s)}>
          <Areas list={s.urban} fill="#5b5b5b" />
          <path d={scatterPath(s.scatter, 977 + i * 131)} fill="#486749" />
          <Areas list={s.green} fill="#466647" />
          <Areas list={s.water} fill="#2f5878" />
          <Lines list={s.minor} stroke="#68686a" width={1} />
        </g>
      ))}
      {sheets.map((s, i) => (
        <g key={i} transform={frame(s)}>
          <Lines list={s.highway} stroke="#594b2b" width={3} />
          <Lines list={s.highway} stroke="#7b682c" width={2} />
          <Lines list={s.freeway} stroke="#574626" width={4} />
          <Lines list={s.freeway} stroke="#79642a" width={3} />
        </g>
      ))}
      {sheets.map((s, i) => (
        <g key={i}>
          {s.shields.map(([kind, text, px, py], k) => {
            const [x, y] = place(s, px, py);
            return <Shield key={k} kind={kind} text={text} x={x} y={y} />;
          })}
          {s.labels.map(([text, px, py, kind], k) => {
            const [x, y] = place(s, px, py);
            return <MapLabel key={k} text={text} x={x} y={y} kind={kind ?? "place"} />;
          })}
        </g>
      ))}
      {poles.map(([x, y], i) => (
        <PoleMarker key={i} x={x} y={y} />
      ))}
      <g className="font-['Liberation_Sans',sans-serif] text-[15px]" fill="#ffffff" fillOpacity="0.5">
        {watermarkY.map((y) =>
          watermarkX.map((x) => (
            <text key={`${x}-${y}`} x={x} y={y} textAnchor="middle" dominantBaseline="central">
              For development purposes only
            </text>
          )),
        )}
      </g>
    </svg>
  );
}

function Logo() {
  return (
    <svg width="130" height="54" viewBox="0 0 130 54" role="img" aria-label="American Electric Power">
      <path d="M75 5L76 1H24L17 51H70L71 47" fill="none" stroke="#c9231f" strokeWidth="2.5" />
      <g
        className="font-['Open_Sans',sans-serif] text-[15px] font-extrabold italic"
        fill="#c9231f"
        stroke="#c9231f"
        strokeWidth="1"
      >
        <text x="37" y="19">AMERICAN</text>
        <text x="35" y="31">ELECTRIC</text>
        <text x="33" y="44">POWER</text>
      </g>
    </svg>
  );
}

const bars = [
  "h-px",
  "h-[13px]",
  "h-[15px]",
  "h-[25px]",
  "h-[22px]",
  "h-[30px]",
  "h-[10px]",
  "h-[22px]",
];

function StatCard({ title, value, text, bar }: { title: string; value: number; text: string; bar: string }) {
  return (
    <section className="bg-white pt-[25px] pb-7">
      <h3 className="px-[25px] text-[16px] leading-[30px] font-medium text-[#313131]">{title}</h3>
      <div className="mt-[11px] flex items-end justify-between pr-[25px] pl-5">
        <div className="flex items-end gap-[5px]" aria-hidden="true">
          {bars.map((h, i) => (
            <span key={i} className={`w-1 ${h} ${bar}`} />
          ))}
        </div>
        <span className={`text-[25px] leading-[30px] font-light ${text}`}>{value}</span>
      </div>
    </section>
  );
}

function NeighbourEdge() {
  return (
    <div className="flex w-[17px] shrink-0 flex-col border-r border-[#8f8f8f] bg-[#181818]" aria-hidden="true">
      <div className="-mr-px h-[469px] bg-linear-to-b from-[#f0f0f0] from-95% to-[#e2e2e2] pt-[7px] pl-[5px]">
        <svg width="8" height="4" viewBox="0 0 8 4">
          <path d="M0 4L4 0L8 4Z" fill="#505050" />
        </svg>
      </div>
      <div className="h-[31px] border-t border-[#8f8f8f] bg-[#2d2d2d]" />
      <div className="h-[23px] overflow-hidden bg-black">
        <svg width="13" height="23" viewBox="0 0 13 23">
          <circle cx="5" cy="11" r="7.5" fill="#0b7bd8" stroke="#e8e8e8" />
          <text
            x="5"
            y="15"
            textAnchor="middle"
            fill="#ffffff"
            className="font-['Liberation_Sans',sans-serif] text-[11px] font-bold"
          >
            ?
          </text>
        </svg>
      </div>
      <div className="h-[92px] border-t border-[#333333] bg-[#202020]" />
      <div className="h-[42px] border-t border-[#333333] bg-[#1b1b1b] pt-[5px]">
        <div className="h-[30px] w-1 border border-l-0 border-[#5a5a5a]" />
      </div>
      <div className="h-[157px] pt-[7px] pl-1">
        <svg width="8" height="6" viewBox="0 0 8 6">
          <path d="M1 5L4 2L7 5" fill="none" stroke="#7a7a7a" strokeWidth="1.500" />
        </svg>
      </div>
      <div className="mr-px flex-1 bg-[#4c4c4c]" />
    </div>
  );
}

function PageScrollbar() {
  return (
    <div
      className="flex w-[17px] shrink-0 flex-col items-center justify-between bg-[#f1f1f1] py-[7px]"
      aria-hidden="true"
    >
      <div className="flex flex-col items-center gap-[7px]">
        <svg width="8" height="4" viewBox="0 0 8 4">
          <path d="M0 4L4 0L8 4Z" fill="#505050" />
        </svg>
        <div className="h-[287px] w-[13px] bg-[#c1c1c1]" />
      </div>
      <svg width="8" height="4" viewBox="0 0 8 4">
        <path d="M0 0L4 4L8 0Z" fill="#505050" />
      </svg>
    </div>
  );
}

export default function App() {
  return (
    <div className="flex h-screen overflow-hidden border-t border-[#121212] bg-[#edf1f5] font-[Roboto,sans-serif]">
      <NeighbourEdge />
      <div className="flex min-w-0 flex-1 border-b border-[#121212]">
        <aside className="z-10 w-60 shrink-0 bg-white shadow-[1px_0_20px_rgba(0,0,0,0.08)]">
          <a href="#home" className="block h-[54px]">
            <Logo />
          </a>
          <nav className="mt-3">
            <a
              href="#dashboard"
              className="flex h-[50px] items-center gap-2.5 border-l-[3px] border-[#40b2fb] pb-px pl-6 text-[15px] font-medium text-[#54667a]"
            >
              <FaRegClock className="size-3.5" />
              Dashboard
            </a>
            <a
              href="#profile"
              className="flex h-[50px] items-center gap-2.5 border-l-[3px] border-transparent pb-px pl-6 text-[15px] font-light text-[#54667a]"
            >
              <FaUser className="size-3.5" />
              Profile
            </a>
          </nav>
        </aside>

        <div className="flex min-w-0 flex-1 flex-col">
          <header className="z-20 flex h-[54px] shrink-0 items-start justify-end bg-[#2f323e] pr-[15px]">
            <form className="mt-[9px] flex h-[30px] w-[180px] items-center rounded-full bg-[#ebebeb] pr-2.5 pl-5">
              <input
                type="text"
                aria-label="Search"
                placeholder="Search..."
                className="min-w-0 flex-1 bg-transparent text-[13px] font-bold text-[#54667a] outline-none placeholder:text-[#8d9ead]"
              />
              <button type="button" aria-label="Search" className="text-[#4c5667]">
                <FaSearch className="size-3.5" />
              </button>
            </form>
            <a href="#user" className="ml-6 flex text-[15px] text-white">
              <svg width="16" height="10" viewBox="0 0 16 10" aria-hidden="true">
                <path d="M0 0H16V10H0Z" fill="#c4d5f5" />
                <path d="M2 10Q4 4 8 4Q11 4 12 6L7 10Z" fill="#4fae33" />
                <path d="M16 2L8 10H12L16 6Z" fill="#2f323e" />
                <path d="M0.500 0V10M15.500 0V2M15.500 6V10" stroke="#a9a9a9" />
              </svg>
              <span className="mt-[11px] leading-6">user-img</span>
              <span className="mt-[11px] ml-2.5 leading-6 font-medium">Jon</span>
            </a>
          </header>

          <div className="flex h-[42px] shrink-0 items-center bg-white px-[25px] pb-0.5">
            <h1 className="text-[15px] font-medium text-[#313131]">DASHBOARD</h1>
          </div>

          <main className="flex min-h-0 flex-1 flex-col gap-[30px] px-[25px] pt-[25px]">
            <div className="grid shrink-0 grid-cols-3 gap-[30px]">
              <StatCard title="ISSUES REPORTED" value={6} text="text-[#7ace4c]" bar="bg-[#7ace4c]" />
              <StatCard title="TOTAL SUBMISSIONS" value={869} text="text-[#707cd2]" bar="bg-[#7460ee]" />
              <StatCard title="NUMBER OF UNIQUE POLES" value={20} text="text-[#2cabe3]" bar="bg-[#11a0f8]" />
            </div>
            <section className="flex min-h-0 flex-1 flex-col bg-white px-[25px] pt-[25px]">
              <h3 className="mb-2 text-[16px] leading-[30px] font-medium text-[#313131]">NETWORK MAP</h3>
              <div className="relative min-h-0 flex-1 overflow-hidden rounded-t-sm">
                <NetworkMap />
                <div className="absolute top-2.5 left-2.5 flex w-10 flex-col items-center rounded-xs bg-white shadow">
                  <button type="button" aria-label="Zoom in" className="flex size-10 items-center justify-center">
                    <svg width="18" height="18" viewBox="0 0 18 18">
                      <path d="M0 9H18M9 0V18" stroke="#666666" strokeWidth="4" />
                    </svg>
                  </button>
                  <span className="h-px w-[30px] bg-[#e6e6e6]" />
                  <button type="button" aria-label="Zoom out" className="flex size-10 items-center justify-center">
                    <svg width="18" height="18" viewBox="0 0 18 18">
                      <path d="M0 9H18" stroke="#666666" strokeWidth="4" />
                    </svg>
                  </button>
                </div>
              </div>
            </section>
          </main>
        </div>
      </div>
      <PageScrollbar />
    </div>
  );
}
